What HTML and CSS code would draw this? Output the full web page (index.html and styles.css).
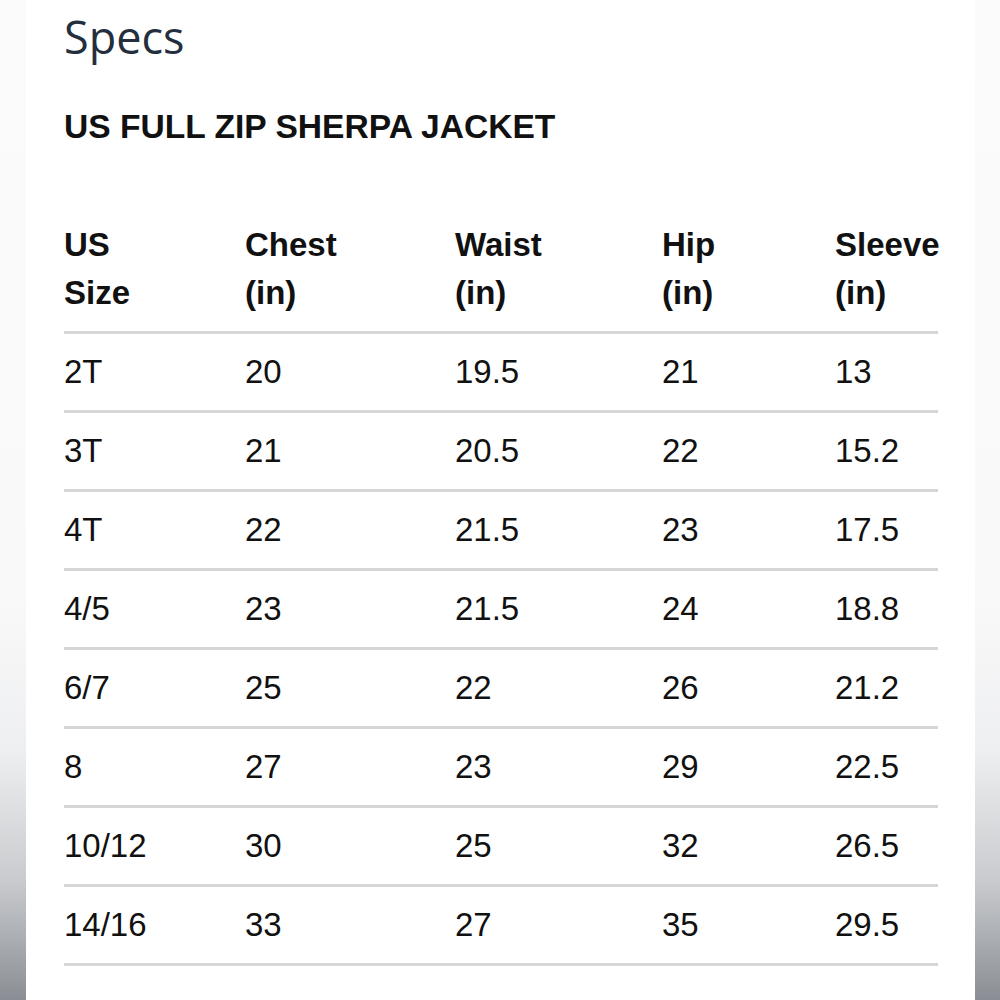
FILE: index.html
```html
<!DOCTYPE html>
<html lang="en">
<head>
<meta charset="utf-8">
<title>Specs</title>
<link rel="stylesheet" href="styles.css">
</head>
<body>
<main class="card">
  <h1 class="title">Specs</h1>
  <h2 class="subtitle">US FULL ZIP SHERPA JACKET</h2>
  <table class="specs">
    <thead>
      <tr>
        <th class="c1">US<br>Size</th>
        <th class="c2">Chest<br>(in)</th>
        <th class="c3">Waist<br>(in)</th>
        <th class="c4">Hip<br>(in)</th>
        <th class="c5">Sleeve<br>(in)</th>
      </tr>
    </thead>
    <tbody>
      <tr><td>2T</td><td>20</td><td>19.5</td><td>21</td><td>13</td></tr>
      <tr><td>3T</td><td>21</td><td>20.5</td><td>22</td><td>15.2</td></tr>
      <tr><td>4T</td><td>22</td><td>21.5</td><td>23</td><td>17.5</td></tr>
      <tr><td>4/5</td><td>23</td><td>21.5</td><td>24</td><td>18.8</td></tr>
      <tr><td>6/7</td><td>25</td><td>22</td><td>26</td><td>21.2</td></tr>
      <tr><td>8</td><td>27</td><td>23</td><td>29</td><td>22.5</td></tr>
      <tr><td>10/12</td><td>30</td><td>25</td><td>32</td><td>26.5</td></tr>
      <tr><td>14/16</td><td>33</td><td>27</td><td>35</td><td>29.5</td></tr>
    </tbody>
  </table>
</main>
</body>
</html>
```

FILE: styles.css
```css
html, body {
  margin: 0;
  padding: 0;
}
body {
  height: 1000px;
  overflow: hidden;
  background: linear-gradient(to bottom, #fbfbfb 0%, #f9f9f9 60%, #eeeff1 75%, #c9cbce 88%, #8a8e94 100%);
  display: flex;
  justify-content: center;
}
.card {
  width: 949px;
  margin-left: 1px;
  background: #ffffff;
  box-sizing: border-box;
  padding: 0 37px 0 38px;
  height: 1000px;
}
.title {
  margin: 0;
  padding-top: 6px;
  font-family: "Open Sans", "Noto Sans", sans-serif;
  font-weight: 400;
  font-size: 45px;
  line-height: 62px;
  color: #232f3e;
}
.subtitle {
  margin: 39px 0 0;
  font-family: "Liberation Sans", Arial, sans-serif;
  font-weight: 700;
  font-size: 33.6px;
  line-height: 40px;
  color: #111111;
}
.specs {
  margin-top: 60px;
  width: 874px;
  border-collapse: collapse;
  table-layout: fixed;
  font-family: "Liberation Sans", Arial, sans-serif;
  font-size: 33px;
  line-height: 48px;
  color: #111111;
}
.specs th,
.specs td {
  text-align: left;
  vertical-align: top;
  padding: 14px 0;
  border-bottom: 3px solid #d6d6d6;
  white-space: nowrap;
}
.specs th {
  font-weight: 700;
}
.c1 { width: 181px; }
.c2 { width: 210px; }
.c3 { width: 207px; }
.c4 { width: 173px; }
.c5 { width: 103px; }
```
